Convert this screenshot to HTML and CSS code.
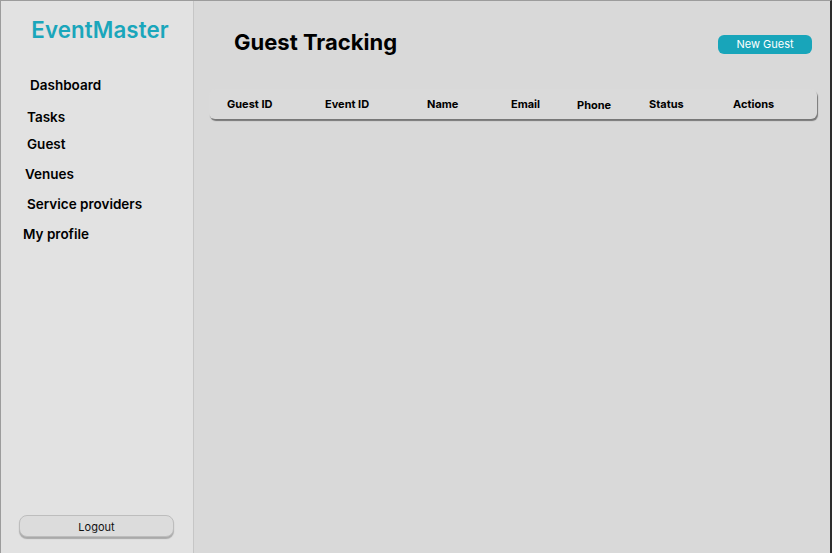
FILE: index.html
```html
<!DOCTYPE html>
<html lang="en">
<head>
<meta charset="utf-8">
<title>EventMaster - Guest Tracking</title>
<link rel="stylesheet" href="styles.css">
</head>
<body>
<div class="app">
  <aside class="sidebar">
    <div class="logo">EventMaster</div>
    <nav class="nav">
      <a class="nav-item nav-dashboard">Dashboard</a>
      <a class="nav-item nav-tasks">Tasks</a>
      <a class="nav-item nav-guest">Guest</a>
      <a class="nav-item nav-venues">Venues</a>
      <a class="nav-item nav-service">Service providers</a>
      <a class="nav-item nav-profile">My profile</a>
    </nav>
    <button class="logout">Logout</button>
  </aside>
  <main class="main">
    <header class="topbar">
      <h1 class="title">Guest Tracking</h1>
      <button class="new-btn">New Guest</button>
    </header>
    <div class="table-head">
      <span>Guest ID</span>
      <span>Event ID</span>
      <span>Name</span>
      <span>Email</span>
      <span class="phone">Phone</span>
      <span>Status</span>
      <span>Actions</span>
    </div>
  </main>
</div>
</body>
</html>
```
FILE: styles.css
```css
* { box-sizing: border-box; }
html, body { margin: 0; padding: 0; }
body {
  width: 832px;
  height: 553px;
  overflow: hidden;
  font-family: Inter, "Noto Sans", sans-serif;
  color: #000;
}
.app {
  display: flex;
  width: 832px;
  height: 553px;
  border-top: 1px solid #9c9c9c;
  border-left: 1px solid #9c9c9c;
  border-right: 2px solid #2e2e2e;
  background: #d9d9d9;
}
.sidebar {
  width: 193px;
  flex: none;
  background: #e2e2e2;
  border-right: 1px solid #c6c6c6;
  display: flex;
  flex-direction: column;
  padding-top: 16px;
}
.logo {
  padding-left: 6px;
  text-align: center;
  font-size: 22.3px;
  font-weight: 600;
  color: #1aa6bb;
  line-height: 26px;
  letter-spacing: 0.1px;
}
.nav {
  display: flex;
  flex-direction: column;
  margin-top: 27px;
}
.nav-item {
  font-size: 13.5px;
  font-weight: 600;
  line-height: 30px;
  height: 30px;
  color: #000;
}
.nav-dashboard { padding-left: 29px; }
.nav-tasks { padding-left: 26px; margin-top: 2px; }
.nav-guest { padding-left: 26px; margin-top: -3px; }
.nav-venues { padding-left: 24px; }
.nav-service { padding-left: 26px; }
.nav-profile { padding-left: 22px; }
.logout {
  margin: auto 0 16px 18px;
  width: 155px;
  height: 22px;
  border: 1px solid #bdbdbd;
  border-radius: 8px;
  background: #dcdcdc;
  box-shadow: 0 2px 1px rgba(0,0,0,0.25);
  font-family: Inter, "Noto Sans", sans-serif;
  font-size: 11px;
  color: #111;
  padding: 2px 0 0;
}
.main {
  flex: 1;
  padding: 0 13px 0 15px;
  display: flex;
  flex-direction: column;
}
.topbar {
  display: flex;
  align-items: flex-start;
  justify-content: space-between;
  padding-top: 28px;
  height: 88px;
}
.title {
  margin: 0 0 0 25px;
  font-size: 22px;
  font-weight: 700;
  line-height: 26px;
}
.new-btn {
  margin-top: 6px;
  width: 94px;
  height: 19px;
  border: none;
  border-radius: 6px;
  background: #18a5ba;
  color: #fff;
  font-family: Inter, "Noto Sans", sans-serif;
  font-size: 11px;
  padding: 0 0 1px;
  margin-right: 5px;
}
.table-head {
  display: grid;
  grid-template-columns: 98px 102px 84px 66px 72px 84px auto;
  align-items: center;
  height: 30px;
  padding-left: 18px;
  padding-bottom: 1px;
  background: #dadada;
  border-radius: 6px;
  box-shadow: 1px 2px 1px rgba(0,0,0,0.45);
  font-size: 11px;
  font-weight: 700;
}
.phone { padding-top: 3px; }
```
